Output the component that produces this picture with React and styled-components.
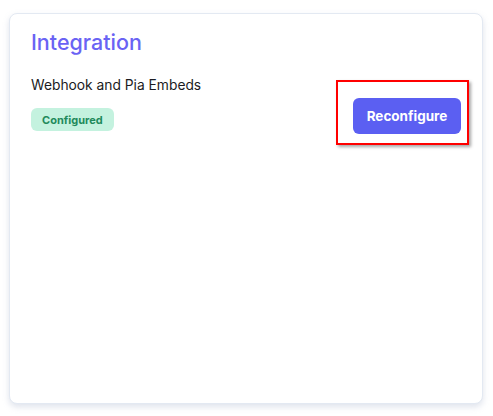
import React from 'react'
import styled, { createGlobalStyle } from 'styled-components'

const GlobalStyle = createGlobalStyle`
    html, body {
        margin: 0;
        padding: 0;
        background: #ffffff;
        font-family: Inter, "Noto Sans", sans-serif;
    }
`

const Page = styled.div`
    width: 493px;
    height: 416px;
    box-sizing: border-box;
    padding: 13px 10px 12px 9px;
`

const Card = styled.div`
    height: 100%;
    box-sizing: border-box;
    border: 1px solid #e3e9f2;
    border-radius: 8px;
    background: #ffffff;
    box-shadow: 0 3px 6px rgba(140, 155, 185, 0.28);
    padding: 14px 21px;
`

const Title = styled.h2`
    margin: 0;
    font-size: 21.5px;
    line-height: 28px;
    font-weight: 500;
    color: #6a63f4;
`

const Row = styled.div`
    display: flex;
    align-items: flex-end;
    justify-content: space-between;
    margin-top: 20px;
`

const Info = styled.div`
    display: flex;
    flex-direction: column;
    align-items: flex-start;
    gap: 14px;
    padding-bottom: 3px;
`

const Name = styled.div`
    font-size: 13.8px;
    line-height: 18px;
    color: #1b1b22;
`

const Badge = styled.span`
    display: inline-flex;
    align-items: center;
    height: 23px;
    padding: 0 11px;
    border-radius: 6px;
    background: #c4f2df;
    color: #1f8a5b;
    font-size: 11px;
    font-weight: 700;
`

const Highlight = styled.div`
    position: relative;
    margin-right: -8px;
`

const Button = styled.button`
    display: block;
    height: 36px;
    width: 108px;
    border: none;
    border-radius: 6px;
    background: #5b5ff2;
    color: #ffffff;
    font-family: inherit;
    font-size: 13.5px;
    font-weight: 700;
    cursor: pointer;
    margin-right: 8px;
`

const Frame = styled.div`
    position: absolute;
    left: -17px;
    top: -18px;
    right: 0;
    bottom: -11px;
    border: 2px solid #ff0000;
    box-shadow: 2px 2px 3px rgba(0, 0, 0, 0.35);
    pointer-events: none;
`

export default function App() {
    return (
        <>
            <GlobalStyle />
            <Page>
                <Card>
                    <Title>Integration</Title>
                    <Row>
                        <Info>
                            <Name>Webhook and Pia Embeds</Name>
                            <Badge>Configured</Badge>
                        </Info>
                        <Highlight>
                            <Button>Reconfigure</Button>
                            <Frame />
                        </Highlight>
                    </Row>
                </Card>
            </Page>
        </>
    )
}
